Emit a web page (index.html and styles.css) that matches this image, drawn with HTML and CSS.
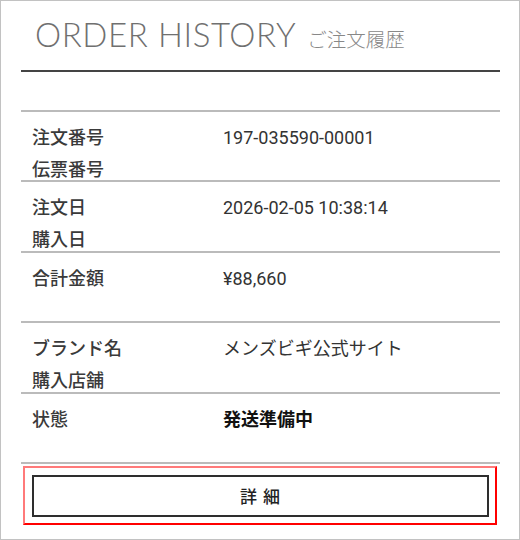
FILE: index.html
```html
<!DOCTYPE html>
<html lang="ja">
<head>
<meta charset="utf-8">
<title>ORDER HISTORY</title>
<link rel="stylesheet" href="styles.css">
</head>
<body>
<div class="panel">
  <header class="head">
    <h1 class="title">ORDER HISTORY</h1>
    <span class="sub">ご注文履歴</span>
  </header>
  <dl class="list">
    <div class="row">
      <dt class="label"><span class="line">注文番号</span><span class="line">伝票番号</span></dt>
      <dd class="value">197-035590-00001</dd>
    </div>
    <div class="row">
      <dt class="label"><span class="line">注文日</span><span class="line">購入日</span></dt>
      <dd class="value">2026-02-05 10:38:14</dd>
    </div>
    <div class="row">
      <dt class="label"><span class="line">合計金額</span></dt>
      <dd class="value">¥88,660</dd>
    </div>
    <div class="row">
      <dt class="label"><span class="line">ブランド名</span><span class="line">購入店舗</span></dt>
      <dd class="value">メンズビギ公式サイト</dd>
    </div>
    <div class="row">
      <dt class="label"><span class="line">状態</span></dt>
      <dd class="value status">発送準備中</dd>
    </div>
  </dl>
  <div class="action">
    <button class="btn" type="button">詳 細</button>
  </div>
</div>
</body>
</html>
```
FILE: styles.css
```css
* { box-sizing: border-box; }
html, body { margin: 0; padding: 0; background: #fff; }
body {
  font-family: "Roboto", "Noto Sans CJK JP", sans-serif;
  color: #333;
}
.panel {
  width: 520px;
  height: 540px;
  border: 1px solid #c2c2c2;
  padding: 13px 19px 0 20px;
}
.head {
  display: flex;
  align-items: baseline;
  padding: 0 0 16px 14px;
  border-bottom: 2px solid #444;
}
.title {
  margin: 0;
  font-family: "Lato", sans-serif;
  font-weight: 300;
  font-size: 33px;
  line-height: 40px;
  letter-spacing: 0.6px;
  color: #707070;
}
.sub {
  margin-left: 11px;
  font-family: "Noto Sans CJK JP", sans-serif;
  font-weight: 300;
  font-size: 19.5px;
  color: #888;
}
.list {
  margin: 38px 0 0;
  padding: 0;
  border-top: 2px solid #bbb;
}
.row {
  display: grid;
  grid-template-columns: 202px 1fr;
  align-items: baseline;
  height: 70.4px;
  padding-top: 8px;
  border-bottom: 2px solid #bbb;
}
.label {
  margin: 0;
  padding-left: 11px;
  font-family: "Noto Sans CJK JP", sans-serif;
  font-weight: 500;
  font-size: 18px;
  line-height: 32px;
  color: #3a3a3a;
}
.line { display: block; }
.value {
  margin: 0;
  font-size: 18px;
  line-height: 32px;
  color: #333;
}
.status {
  font-family: "Noto Sans CJK JP", sans-serif;
  font-weight: 700;
  color: #111;
}
.action {
  margin: 2px 3px 0 2px;
  padding: 7px 6px 6px 7px;
  border: 2px solid;
  border-color: #ff7a7a #f00 #f00 #ff7a7a;
}
.btn {
  display: block;
  width: 100%;
  height: 42px;
  border: 2px solid #2e2e2e;
  background: #fff;
  font-family: "Noto Sans CJK JP", sans-serif;
  font-weight: 500;
  font-size: 17px;
  letter-spacing: 1px;
  color: #222;
  padding: 0;
}
```
